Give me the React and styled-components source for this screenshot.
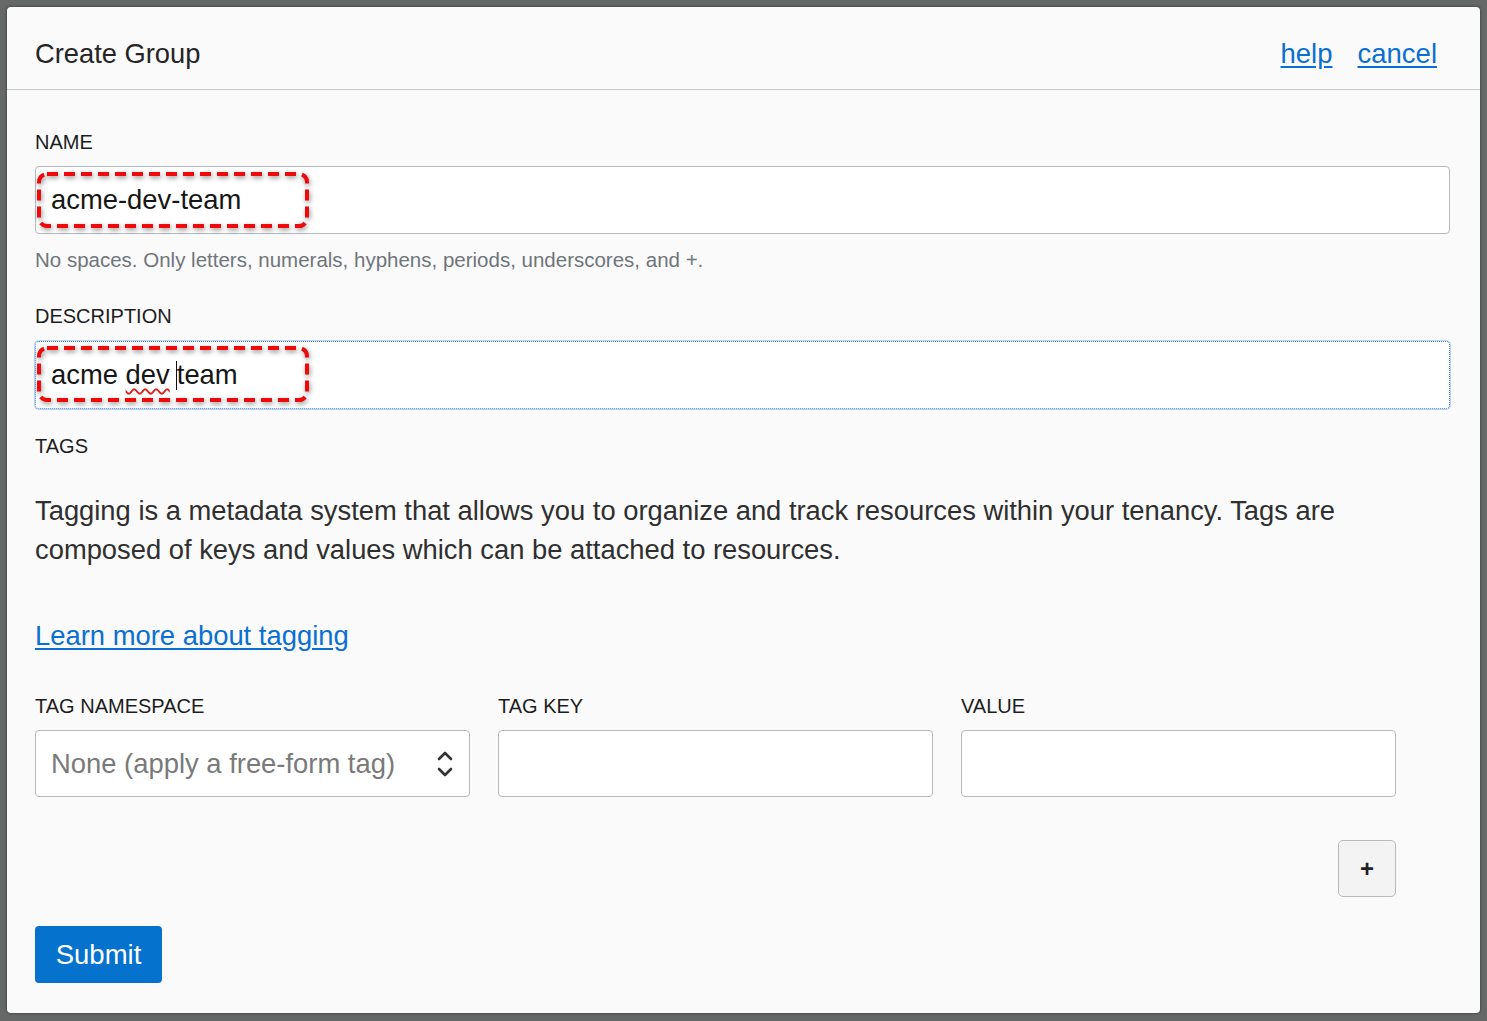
import React from "react";
import styled, { createGlobalStyle } from "styled-components";

const Global = createGlobalStyle`
  html, body { margin: 0; padding: 0; }
  body {
    background: #666767;
    font-family: "Liberation Sans", Arial, sans-serif;
  }
  * { box-sizing: border-box; }
`;

const Page = styled.div`
  padding: 7px 7px 8px 7px;
  width: 1487px;
  min-height: 1021px;
`;

const Dialog = styled.div`
  width: 1473px;
  background: #fafafa;
  border-radius: 4px;
  box-shadow: 0 0 3px rgba(0, 0, 0, 0.55);
  display: flex;
  flex-direction: column;
`;

const Header = styled.div`
  height: 83px;
  padding: 11px 43px 0 28px;
  display: flex;
  align-items: center;
  justify-content: space-between;
  border-bottom: 1px solid #c4c7ca;
`;

const Title = styled.h1`
  margin: 0;
  font-size: 27.3px;
  font-weight: 400;
  color: #252525;
`;

const HeaderLinks = styled.div`
  display: flex;
  gap: 25px;
`;

const Link = styled.a`
  color: #0a6fd2;
  text-decoration: underline;
  text-underline-offset: 3px;
  font-size: ${(p) => p.$fs || 27.5}px;
  line-height: ${(p) => p.$lh || "normal"};
  cursor: pointer;
`;

const Body = styled.div`
  padding: 40px 30px 30px 28px;
  display: flex;
  flex-direction: column;
  align-items: flex-start;
`;

const Label = styled.div`
  font-size: 20px;
  line-height: 24px;
  color: #1d1d1d;
  margin-top: ${(p) => p.$mt || 0}px;
`;

const Field = styled.div`
  position: relative;
  width: ${(p) => p.$w || "100%"};
  height: ${(p) => p.$h || 68}px;
  margin-top: ${(p) => p.$mt || 0}px;
  background: #fff;
  border: 1px solid #b6babf;
  border-radius: 4px;
  display: flex;
  align-items: center;
  padding: 0 15px;
  font-size: 27.4px;
  color: #161616;
  ${(p) =>
    p.$focus &&
    `
    border: 1px dotted #3f86dc;
    box-shadow: 0 0 0 1px rgba(110, 160, 230, 0.45);
  `}
`;

const Help = styled.div`
  margin-top: 14px;
  font-size: 20.5px;
  line-height: 24px;
  color: #70757a;
`;

const Spell = styled.span`
  text-decoration: underline wavy #e0201a;
  text-decoration-thickness: 1.5px;
  text-underline-offset: 4px;
`;

const Caret = styled.span`
  display: inline-block;
  width: 0;
  height: 29px;
  border-left: 1.5px solid #111;
  vertical-align: -6px;
  margin-left: 6px;
`;

const Annot = styled.svg`
  position: absolute;
  left: 1px;
  top: ${(p) => p.$top}px;
  overflow: visible;
  filter: drop-shadow(1px 2px 2.5px rgba(0, 0, 0, 0.45));
  pointer-events: none;
`;

const Paragraph = styled.p`
  margin: 33px 0 0 0;
  font-size: 27.35px;
  line-height: 39px;
  color: #2f2f2f;
`;

const LinkRow = styled.div`
  margin-top: 47px;
`;

const TagGrid = styled.div`
  margin-top: 39px;
  display: grid;
  grid-template-columns: repeat(3, 435px);
  column-gap: 28px;
  row-gap: 12px;
`;

const SelectText = styled.span`
  flex: 1;
  color: #7a7a7a;
`;

const PlusRow = styled.div`
  width: 1361px;
  margin-top: 43px;
  display: flex;
  justify-content: flex-end;
`;

const PlusButton = styled.button`
  width: 58px;
  height: 57px;
  background: #f3f3f3;
  border: 1px solid #b6babf;
  border-radius: 5px;
  font-family: "Liberation Sans", Arial, sans-serif;
  font-size: 24px;
  font-weight: 700;
  color: #222;
  display: flex;
  align-items: center;
  justify-content: center;
  padding: 0;
`;

const SubmitButton = styled.button`
  margin-top: 29px;
  width: 127px;
  height: 57px;
  background: #0572ce;
  border: none;
  border-radius: 4px;
  color: #fff;
  font-family: "Liberation Sans", Arial, sans-serif;
  font-size: 27.5px;
  padding: 0;
`;

const DashBox = ({ top }) => (
  <Annot $top={top} width="272" height="56" viewBox="0 0 272 56">
    <rect
      x="2"
      y="2"
      width="268"
      height="52"
      rx="8"
      ry="8"
      fill="none"
      stroke="#ee0a0a"
      strokeWidth="4"
      strokeDasharray="11 6"
    />
  </Annot>
);

const Chevrons = () => (
  <svg width="18" height="30" viewBox="0 0 18 30">
    <path d="M3 10 L9 4 L15 10" fill="none" stroke="#333" strokeWidth="2.6" strokeLinecap="round" strokeLinejoin="round" />
    <path d="M3 20 L9 26 L15 20" fill="none" stroke="#333" strokeWidth="2.6" strokeLinecap="round" strokeLinejoin="round" />
  </svg>
);

export default function App() {
  return (
    <>
      <Global />
      <Page>
        <Dialog>
          <Header>
            <Title>Create Group</Title>
            <HeaderLinks>
              <Link>help</Link>
              <Link>cancel</Link>
            </HeaderLinks>
          </Header>
          <Body>
            <Label>NAME</Label>
            <Field $mt={12}>
              acme-dev-team
              <DashBox top={5} />
            </Field>
            <Help>No spaces. Only letters, numerals, hyphens, periods, underscores, and +.</Help>

            <Label $mt={32}>DESCRIPTION</Label>
            <Field $mt={13} $focus>
              <span>
                acme <Spell>dev</Spell>
                <Caret />
                team
              </span>
              <DashBox top={4} />
            </Field>

            <Label $mt={25}>TAGS</Label>
            <Paragraph>
              Tagging is a metadata system that allows you to organize and track resources within your tenancy. Tags are
              composed of keys and values which can be attached to resources.
            </Paragraph>
            <LinkRow>
              <Link $lh="39px" $fs={27.4}>Learn more about tagging</Link>
            </LinkRow>

            <TagGrid>
              <Label>TAG NAMESPACE</Label>
              <Label>TAG KEY</Label>
              <Label>VALUE</Label>
              <Field $h={67} $w="435px">
                <SelectText>None (apply a free-form tag)</SelectText>
                <Chevrons />
              </Field>
              <Field $h={67} $w="435px" />
              <Field $h={67} $w="435px" />
            </TagGrid>

            <PlusRow>
              <PlusButton>+</PlusButton>
            </PlusRow>

            <SubmitButton>Submit</SubmitButton>
          </Body>
        </Dialog>
      </Page>
    </>
  );
}
